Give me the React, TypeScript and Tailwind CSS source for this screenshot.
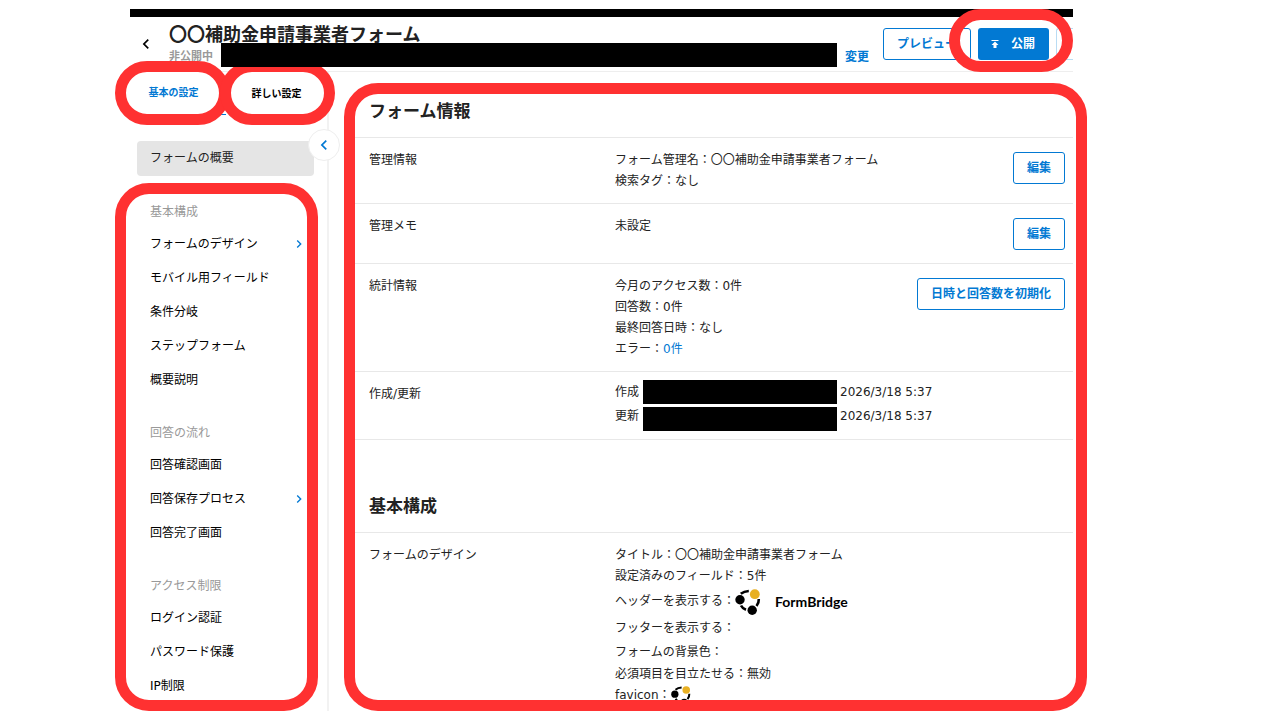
import { MdChevronLeft, MdChevronRight, MdPublish } from "react-icons/md";

interface NavItem {
    label: string;
    hasChildren?: boolean;
}

interface NavGroup {
    title: string;
    items: NavItem[];
}

const navGroups: NavGroup[] = [
    {
        title: "基本構成",
        items: [
            { label: "フォームのデザイン", hasChildren: true },
            { label: "モバイル用フィールド" },
            { label: "条件分岐" },
            { label: "ステップフォーム" },
            { label: "概要説明" },
        ],
    },
    {
        title: "回答の流れ",
        items: [
            { label: "回答確認画面" },
            { label: "回答保存プロセス", hasChildren: true },
            { label: "回答完了画面" },
        ],
    },
    {
        title: "アクセス制限",
        items: [{ label: "ログイン認証" }, { label: "パスワード保護" }, { label: "IP制限" }],
    },
];

// Red marker drawn over the area that the guide is talking about
const Marker = ({ className }: { className: string }) => (
    <div
        aria-hidden="true"
        className={`pointer-events-none absolute border-[11px] border-[#ff3131] ${className}`}
    />
);

const Mark = ({ className }: { className: string }) => (
    <svg viewBox="0 0 26 26" className={className} aria-hidden="true">
        <g fill="none" stroke="#000" strokeWidth="2.6">
            <path d="M5.8 4.8Q9 2.2 13.8 2" />
            <path d="M23.8 10Q24 14 21.5 17" />
            <path d="M6 16.5Q7.5 19.5 11 20.8" />
        </g>
        <circle cx="5" cy="10.7" r="4.7" fill="#000" />
        <circle cx="17.2" cy="21.2" r="4.7" fill="#000" />
        <circle cx="19.8" cy="5.2" r="4.9" fill="#e8b023" />
    </svg>
);

const OutlineButton = ({ children }: { children: string }) => (
    <button className="h-8 shrink-0 rounded-[3px] border border-[#0279d3] bg-white px-[13px] font-bold text-[#0279d3]">
        {children}
    </button>
);

const Row = ({
    label,
    action,
    children,
}: {
    label: string;
    action?: string;
    children: React.ReactNode;
}) => (
    <div className="flex border-t border-[#e8e8e8] pr-2 pl-[15px] leading-[21px]">
        <dt className="w-[246px] shrink-0 pt-3">{label}</dt>
        <dd className="flex flex-1 items-start justify-between">
            <div className="pt-3 pb-[11px]">{children}</div>
            {action && (
                <div className="flex pt-[14px] pb-[13px]">
                    <OutlineButton>{action}</OutlineButton>
                </div>
            )}
        </dd>
    </div>
);

const Header = () => (
    <header className="flex h-[55px] overflow-hidden border-b border-[#eeeeee]">
        <button aria-label="戻る" className="flex w-[39px] items-center pl-[6px] text-black">
            <MdChevronLeft size={20} />
        </button>
        <div className="flex-1 pt-[10px]">
            <h1 className="text-lg leading-4 font-bold text-[#222222]">〇〇補助金申請事業者フォーム</h1>
            <div className="flex items-center gap-2">
                <span className="pt-1 text-[11px] font-bold text-[#999999]">非公開中</span>
                <div className="relative z-20 h-6 flex-1 bg-black" />
                <a href="#" className="pt-1 font-bold text-[#0279d3]">
                    変更
                </a>
            </div>
        </div>
        <div className="flex gap-[7px] pt-[11px] pl-[14px]">
            <OutlineButton>プレビュー</OutlineButton>
            <button className="flex h-8 items-center gap-[10px] rounded-[3px] bg-[#0279d3] pr-[14px] pl-[11px] font-bold text-white">
                <MdPublish size={12} />
                公開
            </button>
            <div className="h-8 w-[17px] rounded-l-[3px] border border-r-0 border-[#b9dcf4]" />
        </div>
    </header>
);

const Sidebar = () => (
    <aside className="relative w-[199px] shrink-0 border-r-2 border-[#f2f2f2]">
        <div className="flex pl-[9px] text-[10px] leading-[42px] font-bold">
            <button className="relative w-[87px] border-b border-[#0279d3] pr-[18px] text-[#0279d3]">
                基本の設定
                <Marker className="-top-[11px] -bottom-[11px] -left-6 w-[115px] rounded-[36px]" />
            </button>
            <button className="relative w-[101px] text-black">
                詳しい設定
                <Marker className="-top-[11px] -bottom-[10px] -left-[6px] w-[115px] rounded-[36px]" />
            </button>
        </div>
        <button
            aria-label="メニューを閉じる"
            className="absolute top-[57px] -right-[13px] z-10 flex h-8 w-8 items-center justify-center rounded-full border border-[#eeeeee] bg-white text-[#0279d3]"
        >
            <MdChevronLeft size={20} />
        </button>
        <div className="pt-[26px] pr-[13px] pl-[7px]">
            <a href="#" className="block rounded bg-[#e5e5e5] pl-[13px] leading-[35px] text-[#222222]">
                フォームの概要
            </a>
        </div>
        <nav className="relative mt-[21px] mb-2 flex flex-col gap-[21px] pr-5 pl-5">
            {navGroups.map((group) => (
                <div key={group.title}>
                    <h2 className="leading-[30px] text-[#999999]">{group.title}</h2>
                    <ul>
                        {group.items.map((item) => (
                            <li key={item.label}>
                                <a href="#" className="flex items-center justify-between leading-[34px] text-black">
                                    {item.label}
                                    {item.hasChildren && <MdChevronRight size={16} className="text-[#0279d3]" />}
                                </a>
                            </li>
                        ))}
                    </ul>
                </div>
            ))}
            <Marker className="-top-[14px] right-[9px] -bottom-2 -left-[15px] rounded-[34px]" />
        </nav>
    </aside>
);

const FormOverview = () => (
    <main className="relative flex-1 pt-[27px] pl-[25px]">
        <section>
            <h2 className="pb-[14px] pl-[15px] text-[17px] leading-6 font-bold">フォーム情報</h2>
            <dl className="border-b border-[#e8e8e8]">
                <Row label="管理情報" action="編集">
                    <p>フォーム管理名：〇〇補助金申請事業者フォーム</p>
                    <p>検索タグ：なし</p>
                </Row>
                <Row label="管理メモ" action="編集">
                    <p>未設定</p>
                </Row>
                <Row label="統計情報" action="日時と回答数を初期化">
                    <p>今月のアクセス数：0件</p>
                    <p>回答数：0件</p>
                    <p>最終回答日時：なし</p>
                    <p>
                        エラー：
                        <a href="#" className="text-[#0279d3]">
                            0件
                        </a>
                    </p>
                </Row>
                <Row label="作成/更新">
                    <div className="-mt-1 -mb-[3px] flex leading-6">
                        <div className="w-7">
                            <p>作成</p>
                            <p>更新</p>
                        </div>
                        <div className="flex w-[194px] flex-col gap-[3px]">
                            <div className="h-6 bg-black" />
                            <div className="h-6 bg-black" />
                        </div>
                        <div className="pl-[3px]">
                            <p>2026/3/18 5:37</p>
                            <p>2026/3/18 5:37</p>
                        </div>
                    </div>
                </Row>
            </dl>
        </section>
        <section className="pt-[54px]">
            <h2 className="pb-[14px] pl-[15px] text-[17px] leading-6 font-bold">基本構成</h2>
            <dl className="-mb-[6px]">
                <Row label="フォームのデザイン">
                    <p>タイトル：〇〇補助金申請事業者フォーム</p>
                    <p>設定済みのフィールド：5件</p>
                    <div className="flex h-[29px] items-center">
                        ヘッダーを表示する：
                        <Mark className="h-[26px] w-[26px]" />
                        <span className="pl-[14px] font-[Lato] text-sm font-bold text-black">FormBridge</span>
                    </div>
                    <p className="leading-6">フッターを表示する：</p>
                    <p className="leading-6">フォームの背景色：</p>
                    <p>必須項目を目立たせる：無効</p>
                    <div className="flex h-[21px] items-center">
                        favicon：
                        <Mark className="h-5 w-5" />
                    </div>
                </Row>
            </dl>
        </section>
        <Marker className="top-[11px] -right-[14px] bottom-0 left-[15px] rounded-[34px]" />
    </main>
);

const App = () => {
    return (
        <div className="min-h-screen bg-white pt-[9px] pr-[207px] pl-[130px] font-['DejaVu_Sans','Noto_Sans_CJK_JP',sans-serif] text-xs text-[#222222]">
            <div className="relative">
                <div className="h-2 bg-black" />
                <Header />
                <Marker className="top-0 right-0 h-[63px] w-[124px] rounded-[32px]" />
            </div>
            <div className="flex">
                <Sidebar />
                <FormOverview />
            </div>
        </div>
    );
};

export default App;
